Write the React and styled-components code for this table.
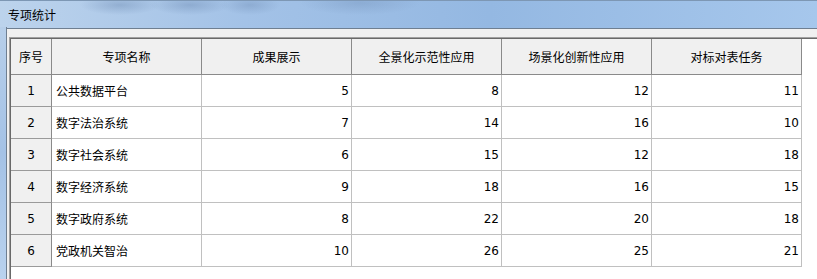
import styled, { createGlobalStyle } from "styled-components";

const GlobalStyle = createGlobalStyle`
  html, body {
    margin: 0;
    padding: 0;
    background: #ffffff;
  }
  body {
    font-family: "Liberation Sans", "Noto Sans CJK SC", sans-serif;
    font-size: 12px;
    color: #000;
  }
`;

const Window = styled.div`
  width: 817px;
  height: 279px;
  overflow: hidden;
  display: flex;
  flex-direction: column;
  background: #ffffff;
`;

const TitleBar = styled.div`
  height: 28px;
  flex: none;
  display: flex;
  align-items: center;
  padding-left: 8px;
  box-sizing: border-box;
  border-top: 1px solid #7d97b4;
  background:
    radial-gradient(ellipse 40px 10px at 120px 4px, rgba(110, 140, 180, 0.45), transparent),
    radial-gradient(ellipse 40px 10px at 190px 4px, rgba(110, 140, 180, 0.45), transparent),
    radial-gradient(ellipse 30px 10px at 250px 4px, rgba(110, 140, 180, 0.4), transparent),
    radial-gradient(ellipse 60px 12px at 360px 2px, rgba(110, 140, 180, 0.35), transparent),
    linear-gradient(90deg, #bcd3ec 0%, #a3c2e7 30%, #94b8e2 60%, #a6c7ec 100%);
  font-family: "Noto Sans CJK SC", sans-serif;
  font-size: 12px;
  color: #000;
`;

const Body = styled.div`
  flex: 1;
  display: flex;
  min-height: 0;
`;

const SideFrame = styled.div`
  width: 6px;
  flex: none;
  background: linear-gradient(180deg, #b7cfea 0%, #a4c2e6 50%, #b9d2ee 100%);
  border-right: 1px solid #6f7f91;
  margin-top: -1px;
`;

const Client = styled.div`
  flex: 1;
  background: #f0f0f0;
  border-top: 1px solid #6f7f91;
  padding: 8px 0 0 2px;
  display: flex;
  min-width: 0;
`;

const TableBox = styled.div`
  flex: 1;
  background: #ffffff;
  border-top: 1px solid #a0a0a0;
  border-left: 1px solid #a0a0a0;
  box-shadow: inset 1px 1px 0 #696969;
  padding: 1px 0 0 1px;
`;

const Grid = styled.div`
  display: grid;
  grid-template-columns: 41px repeat(5, 150px);
  grid-auto-rows: 32px;
  grid-template-rows: 36px;
`;

const HeadCell = styled.div`
  background: #f0f0f0;
  border-right: 1px solid #8a8a8a;
  border-bottom: 1px solid #8a8a8a;
  display: flex;
  align-items: center;
  justify-content: center;
  font-family: "Noto Sans CJK SC", sans-serif;
  font-size: 12px;
`;

const IndexCell = styled.div`
  background: #f0f0f0;
  border-right: 1px solid #8a8a8a;
  border-bottom: 1px solid #9a9a9a;
  display: flex;
  align-items: center;
  justify-content: center;
  font-family: "DejaVu Sans", sans-serif;
  font-size: 12px;
`;

const Cell = styled.div`
  border-right: 1px solid #c0c0c0;
  border-bottom: 1px solid #c0c0c0;
  display: flex;
  align-items: center;
  justify-content: ${(p) => (p.$num ? "flex-end" : "flex-start")};
  padding: ${(p) => (p.$num ? "0 2px 0 0" : "0 0 0 4px")};
  font-family: ${(p) =>
    p.$num ? `"DejaVu Sans", sans-serif` : `"Noto Sans CJK SC", sans-serif`};
  font-size: 12px;
`;

const headers = ["序号", "专项名称", "成果展示", "全景化示范性应用", "场景化创新性应用", "对标对表任务"];

const rows = [
  ["公共数据平台", 5, 8, 12, 11],
  ["数字法治系统", 7, 14, 16, 10],
  ["数字社会系统", 6, 15, 12, 18],
  ["数字经济系统", 9, 18, 16, 15],
  ["数字政府系统", 8, 22, 20, 18],
  ["党政机关智治", 10, 26, 25, 21],
];

export default function App() {
  return (
    <>
      <GlobalStyle />
      <Window>
        <TitleBar>专项统计</TitleBar>
        <Body>
          <SideFrame />
          <Client>
            <TableBox>
              <Grid>
                {headers.map((h) => (
                  <HeadCell key={h}>{h}</HeadCell>
                ))}
                {rows.map((r, i) => [
                  <IndexCell key={`i${i}`}>{i + 1}</IndexCell>,
                  <Cell key={`n${i}`}>{r[0]}</Cell>,
                  ...r.slice(1).map((v, j) => (
                    <Cell key={`v${i}-${j}`} $num>
                      {v}
                    </Cell>
                  )),
                ])}
              </Grid>
            </TableBox>
          </Client>
        </Body>
      </Window>
    </>
  );
}
